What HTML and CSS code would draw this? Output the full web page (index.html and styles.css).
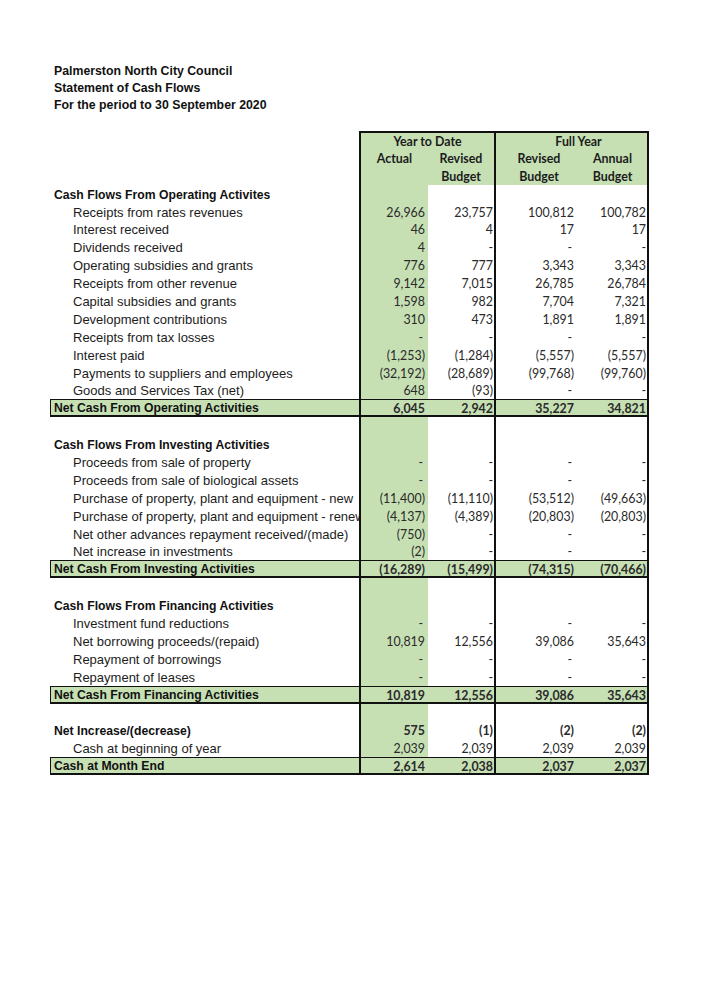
FILE: index.html
```html
<!DOCTYPE html>
<html>
<head>
<meta charset="utf-8">
<link rel="stylesheet" href="styles.css">
</head>
<body>
<div class="page">
  <div class="title">
    <div>Palmerston North City Council</div>
    <div>Statement of Cash Flows</div>
    <div>For the period to 30 September 2020</div>
  </div>
  <div class="sheet">
    <div class="row head first">
      <div class="lab"></div>
      <div class="c a span2 hd">Year to Date</div>
      <div class="c d span2fy hd">Full Year</div>
    </div>
    <div class="row head">
      <div class="lab"></div>
      <div class="c a hd">Actual</div>
      <div class="c b hd">Revised</div>
      <div class="c f hd">Revised</div>
      <div class="c d hd">Annual</div>
    </div>
    <div class="row head">
      <div class="lab"></div>
      <div class="c a hd"></div>
      <div class="c b hd">Budget</div>
      <div class="c f hd">Budget</div>
      <div class="c d hd">Budget</div>
    </div>

    <div class="row sec"><div class="lab">Cash Flows From Operating Activites</div><div class="c a"></div><div class="c b"></div><div class="c f"></div><div class="c d"></div></div>
    <div class="row"><div class="lab">Receipts from rates revenues</div><div class="c a">26,966</div><div class="c b">23,757</div><div class="c f">100,812</div><div class="c d">100,782</div></div>
    <div class="row"><div class="lab">Interest received</div><div class="c a">46</div><div class="c b">4</div><div class="c f">17</div><div class="c d">17</div></div>
    <div class="row"><div class="lab">Dividends received</div><div class="c a">4</div><div class="c b">-</div><div class="c f dash">-</div><div class="c d">-</div></div>
    <div class="row"><div class="lab">Operating subsidies and grants</div><div class="c a">776</div><div class="c b">777</div><div class="c f">3,343</div><div class="c d">3,343</div></div>
    <div class="row"><div class="lab">Receipts from other revenue</div><div class="c a">9,142</div><div class="c b">7,015</div><div class="c f">26,785</div><div class="c d">26,784</div></div>
    <div class="row"><div class="lab">Capital subsidies and grants</div><div class="c a">1,598</div><div class="c b">982</div><div class="c f">7,704</div><div class="c d">7,321</div></div>
    <div class="row"><div class="lab">Development contributions</div><div class="c a">310</div><div class="c b">473</div><div class="c f">1,891</div><div class="c d">1,891</div></div>
    <div class="row"><div class="lab">Receipts from tax losses</div><div class="c a dash">-</div><div class="c b">-</div><div class="c f dash">-</div><div class="c d">-</div></div>
    <div class="row"><div class="lab">Interest paid</div><div class="c a">(1,253)</div><div class="c b">(1,284)</div><div class="c f">(5,557)</div><div class="c d">(5,557)</div></div>
    <div class="row"><div class="lab">Payments to suppliers and employees</div><div class="c a">(32,192)</div><div class="c b">(28,689)</div><div class="c f">(99,768)</div><div class="c d">(99,760)</div></div>
    <div class="row"><div class="lab">Goods and Services Tax (net)</div><div class="c a">648</div><div class="c b">(93)</div><div class="c f dash">-</div><div class="c d">-</div></div>
    <div class="row net"><div class="lab">Net Cash From Operating Activities</div><div class="c a">6,045</div><div class="c b">2,942</div><div class="c f">35,227</div><div class="c d">34,821</div></div>
    <div class="row"><div class="lab"></div><div class="c a"></div><div class="c b"></div><div class="c f"></div><div class="c d"></div></div>

    <div class="row sec"><div class="lab">Cash Flows From Investing Activities</div><div class="c a"></div><div class="c b"></div><div class="c f"></div><div class="c d"></div></div>
    <div class="row"><div class="lab">Proceeds from sale of property</div><div class="c a dash">-</div><div class="c b">-</div><div class="c f dash">-</div><div class="c d">-</div></div>
    <div class="row"><div class="lab">Proceeds from sale of biological assets</div><div class="c a dash">-</div><div class="c b">-</div><div class="c f dash">-</div><div class="c d">-</div></div>
    <div class="row"><div class="lab">Purchase of property, plant and equipment - new</div><div class="c a">(11,400)</div><div class="c b">(11,110)</div><div class="c f">(53,512)</div><div class="c d">(49,663)</div></div>
    <div class="row"><div class="lab">Purchase of property, plant and equipment - renewals</div><div class="c a">(4,137)</div><div class="c b">(4,389)</div><div class="c f">(20,803)</div><div class="c d">(20,803)</div></div>
    <div class="row"><div class="lab">Net other advances repayment received/(made)</div><div class="c a">(750)</div><div class="c b">-</div><div class="c f dash">-</div><div class="c d">-</div></div>
    <div class="row"><div class="lab">Net increase in investments</div><div class="c a">(2)</div><div class="c b">-</div><div class="c f dash">-</div><div class="c d">-</div></div>
    <div class="row net"><div class="lab">Net Cash From Investing Activities</div><div class="c a">(16,289)</div><div class="c b">(15,499)</div><div class="c f">(74,315)</div><div class="c d">(70,466)</div></div>
    <div class="row"><div class="lab"></div><div class="c a"></div><div class="c b"></div><div class="c f"></div><div class="c d"></div></div>

    <div class="row sec"><div class="lab">Cash Flows From Financing Activities</div><div class="c a"></div><div class="c b"></div><div class="c f"></div><div class="c d"></div></div>
    <div class="row"><div class="lab">Investment fund reductions</div><div class="c a dash">-</div><div class="c b">-</div><div class="c f dash">-</div><div class="c d">-</div></div>
    <div class="row"><div class="lab">Net borrowing proceeds/(repaid)</div><div class="c a">10,819</div><div class="c b">12,556</div><div class="c f">39,086</div><div class="c d">35,643</div></div>
    <div class="row"><div class="lab">Repayment of borrowings</div><div class="c a dash">-</div><div class="c b">-</div><div class="c f dash">-</div><div class="c d">-</div></div>
    <div class="row"><div class="lab">Repayment of leases</div><div class="c a dash">-</div><div class="c b">-</div><div class="c f dash">-</div><div class="c d">-</div></div>
    <div class="row net"><div class="lab">Net Cash From Financing Activities</div><div class="c a">10,819</div><div class="c b">12,556</div><div class="c f">39,086</div><div class="c d">35,643</div></div>
    <div class="row"><div class="lab"></div><div class="c a"></div><div class="c b"></div><div class="c f"></div><div class="c d"></div></div>

    <div class="row sec bnum"><div class="lab">Net Increase/(decrease)</div><div class="c a">575</div><div class="c b">(1)</div><div class="c f">(2)</div><div class="c d">(2)</div></div>
    <div class="row"><div class="lab">Cash at beginning of year</div><div class="c a">2,039</div><div class="c b">2,039</div><div class="c f">2,039</div><div class="c d">2,039</div></div>
    <div class="row net last"><div class="lab">Cash at Month End</div><div class="c a">2,614</div><div class="c b">2,038</div><div class="c f">2,037</div><div class="c d">2,037</div></div>
  </div>
</div>
</body>
</html>
```
FILE: styles.css
```css
html, body {
  margin: 0;
  padding: 0;
  background: #ffffff;
}
.page {
  padding: 63px 0 0 50px;
  width: 652px;
}
.title {
  padding-left: 4px;
  font-family: "Liberation Sans", Arial, sans-serif;
  font-weight: bold;
  font-size: 12.3px;
  line-height: 17px;
  color: #111;
}
.sheet {
  margin-top: 17px;
  width: 599px;
}
.row {
  display: grid;
  grid-template-columns: 309px 69px 68px 82px 71px;
  grid-template-rows: 100%;
  height: 17.9px;
  box-sizing: border-box;
}
.lab, .c {
  box-sizing: border-box;
  height: 100%;
  padding-top: 3px;
  line-height: 14px;
  white-space: nowrap;
}
.lab {
  font-family: "Liberation Sans", Arial, sans-serif;
  font-size: 13px;
  color: #1c1c1c;
  padding-left: 23px;
  overflow-x: clip;
  overflow-y: visible;
}
.sec .lab, .net .lab {
  padding-left: 4px;
  font-weight: bold;
  font-size: 12.2px;
  color: #111;
}
.c {
  font-family: Lato, "Open Sans", sans-serif;
  font-size: 12.4px;
  color: #2a2a2a;
  text-align: right;
}
.c.a {
  background: #c6e0b4;
  border-left: 2px solid #111;
  padding-right: 3px;
}
.c.b {
  border-right: 2px solid #111;
  padding-right: 1px;
}
.c.f {
  padding-right: 4px;
}
.c.d {
  border-right: 2px solid #111;
  padding-right: 1px;
}
.c.dash {
  padding-right: 5px;
}
.c.f.dash {
  padding-right: 6px;
}
.head .c {
  background: #c6e0b4;
  text-align: center;
  font-weight: bold;
  color: #1c1c1c;
  padding-right: 0;
}
.head .hd.f {
  padding-left: 4px;
}
.head .span2 {
  grid-column: 2 / span 2;
  border-right: 2px solid #111;
}
.head .span2fy {
  grid-column: 4 / span 2;
  padding-left: 14px;
}
.head.first .c {
  border-top: 2px solid #111;
  padding-top: 2px;
}
.net {
  background: #c6e0b4;
  border-left: 1px solid #111;
  border-top: 1px solid #111;
  border-bottom: 2px solid #111;
  grid-template-columns: 308px 69px 68px 82px 71px;
}
.net .c, .net .lab {
  padding-top: 2px;
  line-height: 13px;
}
.net .c {
  font-weight: bold;
}
.net .lab {
  padding-left: 3px;
}
.bnum .c {
  font-weight: bold;
}
```
